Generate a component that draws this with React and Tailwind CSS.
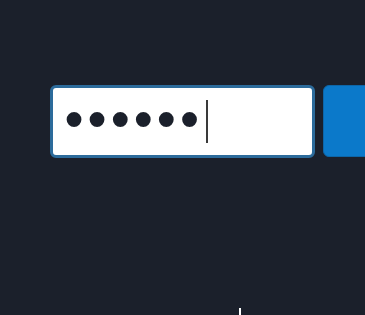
export default function App() {
  return (
    <div className="w-[365px] h-[315px] bg-[#1b202b] overflow-hidden flex flex-col">
      <div className="flex gap-2 pl-[50px] pt-[85px]">
        <div className="w-[265px] h-[73px] shrink-0 rounded-[6px] border-[3px] border-[#2c6b9b] bg-white flex items-center pl-[6px]">
          <span
            className="text-[#1b202b] text-[51px] leading-none tracking-[-7px]"
            style={{ fontFamily: '"DejaVu Sans", sans-serif' }}
          >
            ••••••
          </span>
          <span className="w-[2px] h-[43px] bg-[#3a3a3a] ml-[8px]" />
        </div>
        <button className="w-[60px] h-[72px] shrink-0 rounded-[6px] bg-[#0b79ca] border border-[#0d66a8]" />
      </div>
      <div className="flex-1" />
      <div className="flex pl-[239px]">
        <span className="w-[2px] h-[7px] bg-white" />
      </div>
    </div>
  );
}
